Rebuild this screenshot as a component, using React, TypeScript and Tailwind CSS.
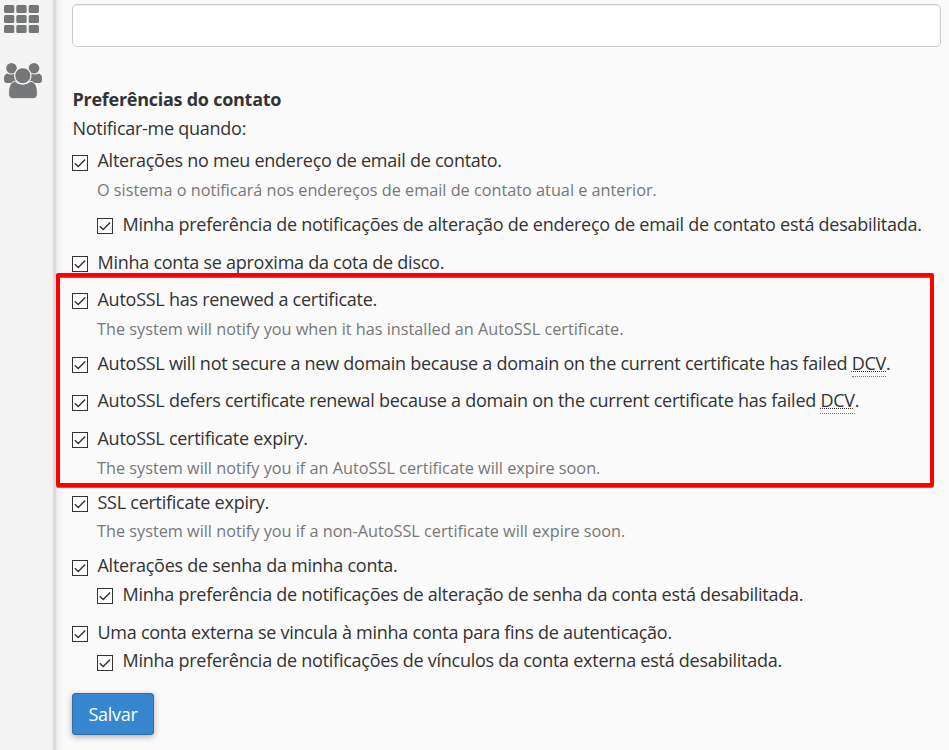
import { ReactNode } from 'react';

interface PreferenceRow {
  kind: 'option' | 'sub' | 'note';
  content: ReactNode;
  spacing: string;
  box?: string;
}

function Dcv() {
  return (
    <abbr
      title="Domain Control Validation"
      className="border-b border-dotted border-[#777] pb-px underline decoration-dotted decoration-1 underline-offset-1"
    >
      DCV
    </abbr>
  );
}

const rows: PreferenceRow[] = [
  { kind: 'option', content: 'Alterações no meu endereço de email de contato.', spacing: 'mt-1', box: 'mt-[9px]' },
  { kind: 'note', content: 'O sistema o notificará nos endereços de email de contato atual e anterior.', spacing: 'mt-0.5' },
  {
    kind: 'sub',
    content: 'Minha preferência de notificações de alteração de endereço de email de contato está desabilitada.',
    spacing: 'mt-[6px]',
    box: 'mt-2',
  },
  { kind: 'option', content: 'Minha conta se aproxima da cota de disco.', spacing: 'mt-[10px]', box: 'mt-2' },
  { kind: 'option', content: 'AutoSSL has renewed a certificate.', spacing: 'mt-[9px]', box: 'mt-2' },
  { kind: 'note', content: 'The system will notify you when it has installed an AutoSSL certificate.', spacing: 'mt-0.5' },
  {
    kind: 'option',
    content: <>AutoSSL will not secure a new domain because a domain on the current certificate has failed <Dcv />.</>,
    spacing: 'mt-[6px]',
    box: 'mt-2',
  },
  {
    kind: 'option',
    content: <>AutoSSL defers certificate renewal because a domain on the current certificate has failed <Dcv />.</>,
    spacing: 'mt-[9px]',
    box: 'mt-[9px]',
  },
  { kind: 'option', content: 'AutoSSL certificate expiry.', spacing: 'mt-[10px]', box: 'mt-2' },
  { kind: 'note', content: 'The system will notify you if an AutoSSL certificate will expire soon.', spacing: 'mt-0.5' },
  { kind: 'option', content: 'SSL certificate expiry.', spacing: 'mt-[6px]', box: 'mt-2' },
  { kind: 'note', content: 'The system will notify you if a non-AutoSSL certificate will expire soon.', spacing: 'mt-px' },
  { kind: 'option', content: 'Alterações de senha da minha conta.', spacing: 'mt-[6px]', box: 'mt-[9px]' },
  {
    kind: 'sub',
    content: 'Minha preferência de notificações de alteração de senha da conta está desabilitada.',
    spacing: 'mt-px',
    box: 'mt-2',
  },
  {
    kind: 'option',
    content: 'Uma conta externa se vincula à minha conta para fins de autenticação.',
    spacing: 'mt-[10px]',
    box: 'mt-2',
  },
  {
    kind: 'sub',
    content: 'Minha preferência de notificações de vínculos da conta externa está desabilitada.',
    spacing: 'mt-0',
    box: 'mt-[9px]',
  },
];

function Checkbox() {
  return (
    <svg viewBox="0 0 16 16" className="block h-4 w-4">
      <rect x="0.5" y="0.5" width="15" height="15" fill="#fff" stroke="#333" />
      <path d="M2.8 8.2 6.2 11.6 13.2 4.6" fill="none" stroke="#333" strokeWidth="1.4" />
    </svg>
  );
}

function Row({ row }: { row: PreferenceRow }) {
  if (row.kind === 'note') {
    return (
      <p className={`h-7 pl-[25px] text-[16.25px] leading-7 tracking-normal text-[#777] ${row.spacing}`}>
        {row.content}
      </p>
    );
  }

  return (
    <label className={`flex h-7 items-start gap-[9.5px] ${row.kind === 'sub' ? 'pl-[25px]' : ''} ${row.spacing}`}>
      <span className={`shrink-0 ${row.box}`}>
        <Checkbox />
      </span>
      <span className="leading-7">{row.content}</span>
    </label>
  );
}

function GridIcon() {
  return (
    <svg viewBox="0 0 36 28" className="h-7 w-9" fill="#757779">
      {[0, 10, 20].map((y) =>
        [0, 12.3, 24.7].map((x) => <rect key={`${x}-${y}`} x={x} y={y} width="10.3" height="8" rx="1.5" />)
      )}
    </svg>
  );
}

function UsersIcon() {
  return (
    <svg viewBox="0 0 38 36" className="h-9 w-[38px]" fill="#757779">
      <circle cx="7.5" cy="5.3" r="5.3" />
      <circle cx="30" cy="5.3" r="5.3" />
      <path d="M3 10.5Q7 12.5 11 10.8L15 20H3Q0 20 0 17V15Q0 11.5 3 10.5Z" />
      <path d="M35 10.5Q31 12.5 27 10.8L23 20H35Q38 20 38 17V15Q38 11.5 35 10.5Z" />
      <path
        d="M10.5 18.2Q18.8 24 27 18.2Q33.4 20 33.4 29V31Q33.4 35.7 28.7 35.7H9.3Q4.6 35.7 4.6 31V29Q4.6 20 10.5 18.2Z"
        stroke="#f4f4f4"
        strokeWidth="1"
      />
      <circle cx="18.8" cy="12.7" r="8.2" stroke="#f4f4f4" strokeWidth="1.3" />
    </svg>
  );
}

export default function App() {
  return (
    <div className="flex h-[750px] w-[949px] overflow-hidden bg-[#fafafa] font-['Open_Sans',sans-serif] text-[18px] tracking-[-0.26px] text-[#333]">
      <aside className="flex w-[53px] shrink-0 flex-col gap-[30px] bg-[#f4f4f4] pt-[5px] pl-1">
        <GridIcon />
        <UsersIcon />
      </aside>
      <div className="w-[11px] shrink-0 bg-linear-to-r from-[#dcdcdc] from-25% via-[#f1f1f1] via-35% to-[#fafafa]" />

      <main className="relative min-w-0 flex-1 pt-1 pr-2 pl-2">
        <input
          type="text"
          className="block h-[43px] w-full rounded-[5px] border border-[#ccc] bg-white shadow-[inset_0_1px_1px_rgba(0,0,0,0.075)]"
        />

        <h2 className="mt-[38px] h-7 pl-[0.5px] font-bold leading-7">Preferências do contato</h2>
        <p className="mt-px h-7 pl-[0.5px] leading-7">Notificar-me quando:</p>

        <div className="whitespace-nowrap">
          {rows.map((row, idx) => (
            <Row key={idx} row={row} />
          ))}
        </div>

        <button
          type="button"
          className="mt-[19px] block h-[42px] w-[82px] rounded-[3px] border border-[#2e6da4] bg-[#3787d0] text-white shadow-[0_2px_6px_rgba(0,0,0,0.3)]"
        >
          Salvar
        </button>

        {/* Highlight around the AutoSSL options */}
        <div className="pointer-events-none absolute top-[273px] -left-2 h-[214px] w-[878px] rounded-[2px] border-4 border-[#ff0000] shadow-[0_1px_0_#777,inset_0_1px_0_#777]" />
      </main>
    </div>
  );
}
